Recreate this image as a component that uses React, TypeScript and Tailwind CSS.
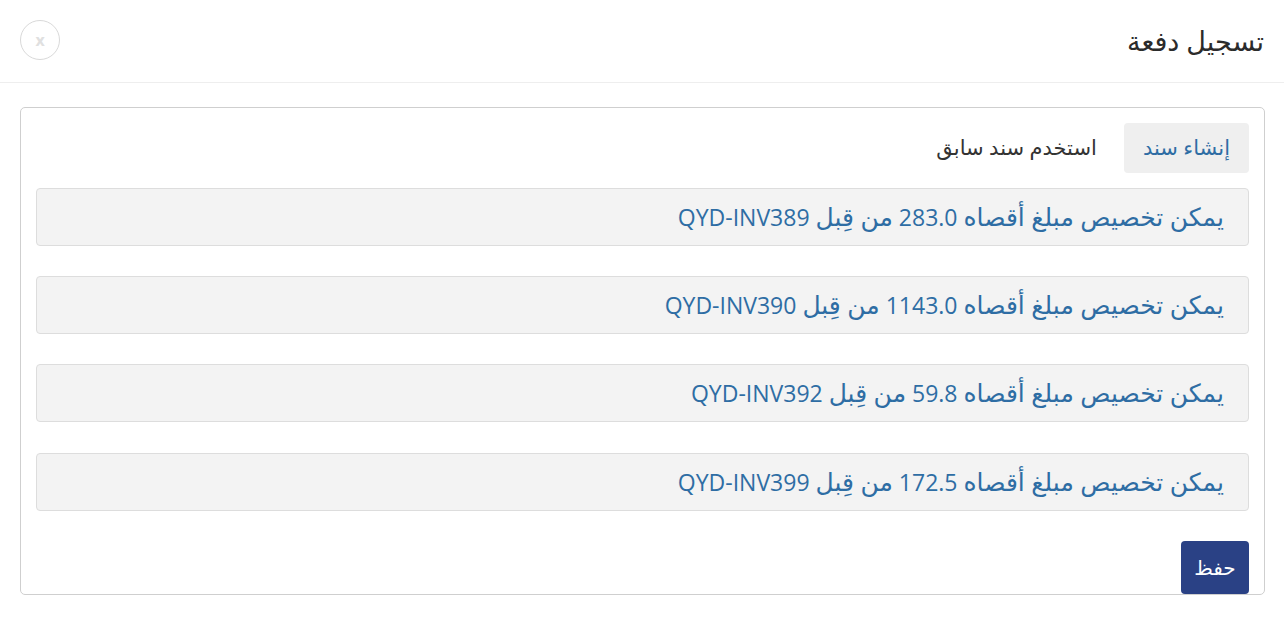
const rows = [
  { amount: "283.0", inv: "QYD-INV389" },
  { amount: "1143.0", inv: "QYD-INV390" },
  { amount: "59.8", inv: "QYD-INV392" },
  { amount: "172.5", inv: "QYD-INV399" },
];

export default function App() {
  return (
    <div
      dir="rtl"
      className="min-h-[631px] bg-white"
      style={{ fontFamily: '"Open Sans", "DejaVu Sans", sans-serif' }}
    >
      <div className="flex h-[83px] items-center justify-between border-b border-[#eeeeee] px-5">
        <h1 className="text-[27px] font-normal text-[#2b2b2b]">تسجيل دفعة</h1>
        <button className="mb-[3px] flex h-10 w-10 items-center justify-center rounded-full border border-[#d9d9d9] text-[#e0e0e0]">
          <span className="text-[16px] font-bold leading-none">x</span>
        </button>
      </div>

      <div className="ml-5 mr-[19px] mt-6 rounded-[5px] border border-[#cfcfcf] px-[15px] pt-[15px]">
        <div className="flex items-center gap-[27px]">
          <button className="h-[50px] rounded-[4px] bg-[#efefef] px-[19px] text-[21px] text-[#2e6da4]">
            إنشاء سند
          </button>
          <span className="text-[21px] text-[#333333]">استخدم سند سابق</span>
        </div>

        <div className="mt-[15px] flex flex-col gap-[30px]">
          {rows.map((r, i) => (
            <div
              key={r.inv}
              className={`flex h-[58px] items-center rounded-[4px] border border-[#dddddd] bg-[#f3f3f3] px-6 text-[23px] text-[#2e6da4] ${i === 3 ? "mt-px" : ""}`}
            >
              <span>
                <span className="text-[25px]">يمكن تخصيص مبلغ أقصاه</span> {r.amount}{" "}
                <span className="text-[25px]">من قِبل</span> {r.inv}
              </span>
            </div>
          ))}
        </div>

        <div className="mt-[30px] flex">
          <button className="h-[53px] w-[68px] rounded-[4px] bg-[#2a4185] text-[20px] text-white">
            حفظ
          </button>
        </div>
      </div>
    </div>
  );
}
